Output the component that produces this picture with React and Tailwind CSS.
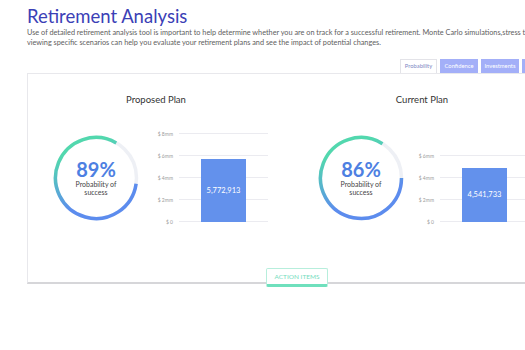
import React from 'react'

const tabs = [
  { label: 'Probability', active: true },
  { label: 'Confidence' },
  { label: 'Investments' },
  { label: 'Stress Test' },
]

const polar = (c, r, deg) => {
  const a = (deg * Math.PI) / 180
  return [c + r * Math.sin(a), c - r * Math.cos(a)]
}

const Donut = ({ id, value, from, to }) => {
  const c = 43
  const r = 40.5
  const [x1, y1] = polar(c, r, from)
  const [x2, y2] = polar(c, r, to)
  return (
    <div className="relative w-[86px] h-[86px] shrink-0">
      <svg width="86" height="86" className="absolute inset-0">
        <defs>
          <linearGradient id={id} gradientUnits="userSpaceOnUse" x1="25" y1="5" x2="55" y2="80">
            <stop offset="0.12" stopColor="#52d8ae" />
            <stop offset="0.78" stopColor="#5c8cee" />
          </linearGradient>
        </defs>
        <circle cx={c} cy={c} r={r} fill="none" stroke="#eef0f5" strokeWidth="3.5" />
        <path
          d={`M ${x1} ${y1} A ${r} ${r} 0 1 1 ${x2} ${y2}`}
          fill="none"
          stroke={`url(#${id})`}
          strokeWidth="3.5"
        />
      </svg>
      <div className="absolute inset-0 flex flex-col items-center justify-center pb-[2px]">
        <div className="text-[20px] leading-[20px] font-bold text-[#4d80e2]">{value}</div>
        <div className="text-[7px] leading-[8px] text-[#444] mt-[1px] text-center">
          Probability of
          <br />
          success
        </div>
      </div>
    </div>
  )
}

const BarChart = ({ ticks, bar, barHeight, plotWidth }) => (
  <div className="flex">
    <div className="relative w-[30px] h-[89px]">
      {ticks.map((t, i) => (
        <div
          key={t}
          className="absolute right-0 text-[5px] leading-[6px] text-[#9b9b9b] translate-y-1/2 whitespace-nowrap"
          style={{ bottom: i * 22 }}
        >
          {t}
        </div>
      ))}
    </div>
    <div className="relative h-[89px] ml-[6px]" style={{ width: plotWidth }}>
      {ticks.map((t, i) => (
        <div
          key={t}
          className="absolute left-0 right-0 h-px bg-[#ebebf0]"
          style={{ bottom: i * 22 }}
        />
      ))}
      <div
        className="absolute bottom-0 left-[22px] w-[45px] bg-[#6391ec] flex items-center justify-center text-white text-[7.5px]"
        style={{ height: barHeight }}
      >
        {bar}
      </div>
    </div>
  </div>
)

export default function App() {
  return (
    <div className="w-[525px] h-[350px] overflow-hidden bg-white font-['Lato',sans-serif]">
      <div className="pl-[27px] pt-[5px] w-[560px]">
        <h1 className="text-[18.5px] leading-[23px] text-[#3b40b6]">Retirement Analysis</h1>
        <p className="text-[7.3px] leading-[10px] text-[#5e5e5e] whitespace-nowrap">
          Use of detailed retirement analysis tool is important to help determine whether you are on track for a successful retirement. Monte Carlo simulations,stress testing and
          <br />
          viewing specific scenarios can help you evaluate your retirement plans and see the impact of potential changes.
        </p>

        <div className="flex justify-end gap-[3px] mt-[11px]">
          {tabs.map((t) =>
            t.active ? (
              <div
                key={t.label}
                className="w-[37px] h-[14px] flex items-center justify-center text-[5.8px] text-[#7d88c4] bg-white border border-b-0 border-[#e3e3e8]"
              >
                {t.label}
              </div>
            ) : (
              <div
                key={t.label}
                className="w-[38px] h-[14px] flex items-center justify-center text-[5.8px] text-white bg-[#a3aff8]"
              >
                {t.label}
              </div>
            )
          )}
        </div>

        <div className="relative h-[211px] border-l border-t border-[#e8e8ec] border-b-2 border-b-[#d6d6d9]">
          <div className="flex">
            <div className="w-[266px] flex flex-col">
              <div className="text-center text-[9.5px] leading-[12px] text-[#333] mt-[20px]">Proposed Plan</div>
              <div className="flex items-start mt-[27px] pl-[25px]">
                <div className="mt-[2px]">
                  <Donut id="g1" value="89%" from={98} to={390} />
                </div>
                <div className="ml-[4px]">
                  <BarChart ticks={['$ 0', '$ 2mm', '$ 4mm', '$ 6mm', '$ 8mm']} bar="5,772,913" barHeight={63} plotWidth={89} />
                </div>
              </div>
            </div>
            <div className="w-[280px] flex flex-col">
              <div className="text-center text-[9.5px] leading-[12px] text-[#333] mt-[20px]">Current Plan</div>
              <div className="flex items-start mt-[27px] pl-[34px]">
                <div className="mt-[2px]">
                  <Donut id="g2" value="86%" from={90} to={392} />
                </div>
                <div>
                  <BarChart ticks={['$ 0', '$ 2mm', '$ 4mm', '$ 6mm']} bar="4,541,733" barHeight={54} plotWidth={120} />
                </div>
              </div>
            </div>
          </div>

          <button className="absolute left-[238px] top-[194px] w-[62px] h-[19px] bg-white border border-[#b7eedc] border-b-[3px] border-b-[#6fe0bd] rounded-[2px] text-[6.5px] text-[#74dcbd] flex items-center justify-center">
            ACTION ITEMS
          </button>
        </div>
      </div>
    </div>
  )
}
